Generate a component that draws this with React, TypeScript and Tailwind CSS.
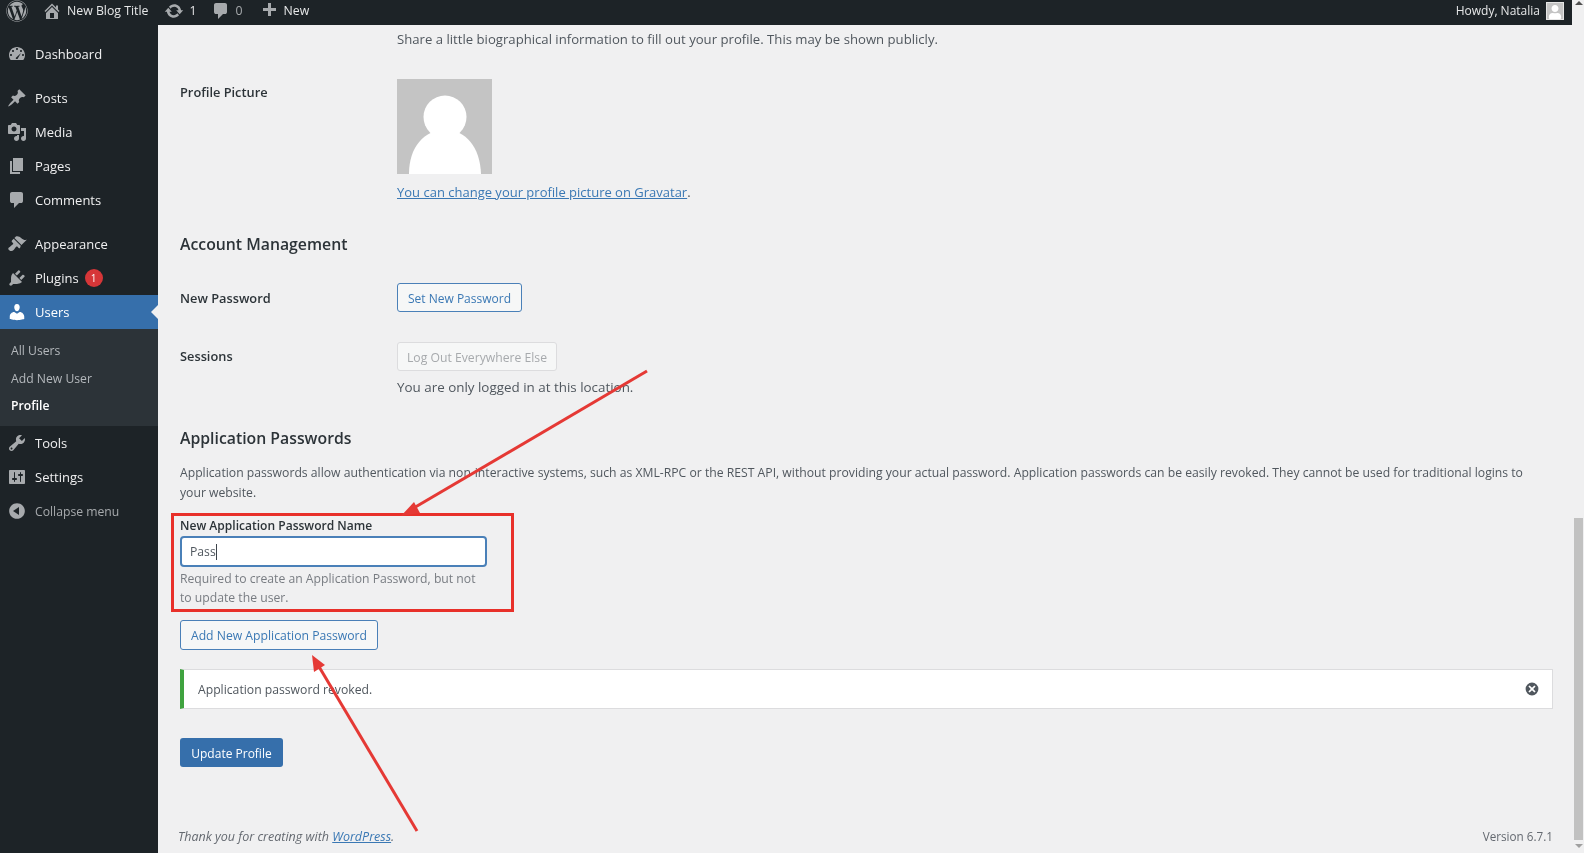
import React from 'react';
import { FaWordpress, FaUser } from 'react-icons/fa';

const Dash = ({ d, className = 'fill-[#a7aaad]' }: { d: string; className?: string }) => (
  <svg viewBox="0 0 20 20" className={`w-[20px] h-[20px] shrink-0 ${className}`}>
    <path d={d} fillRule="evenodd" />
  </svg>
);

const P = {
  dashboard: 'M3.76 16h12.48c1.1-1.37 1.76-3.11 1.76-5 0-4.420-3.580-8-8-8s-8 3.580-8 8c0 1.890.66 3.630 1.760 5zM10 4c.55 0 1 .45 1 1s-.45 1-1 1-1-.45-1-1 .45-1 1-1zM6 6c.55 0 1 .45 1 1s-.45 1-1 1-1-.45-1-1 .45-1 1-1zm8 0c.55 0 1 .45 1 1s-.45 1-1 1-1-.45-1-1 .45-1 1-1zM4 10c.55 0 1 .45 1 1s-.45 1-1 1-1-.45-1-1 .45-1 1-1zm12 0c.55 0 1 .45 1 1s-.45 1-1 1-1-.45-1-1 .45-1 1-1zM9 15l-.3-.9 5.300-5.100-3.500 6z',
  post: 'M10.44 3.020l1.820-1.820 6.360 6.350-1.830 1.820c-1.050-.68-2.480-.57-3.410.36l-.75.75c-.92.93-1.040 2.350-.35 3.410l-1.830 1.820-2.410-2.410-2.800 2.790c-.42.42-3.380 2.710-3.800 2.290s1.860-3.390 2.280-3.810l2.790-2.790L4.100 9.360l1.830-1.820c1.050.69 2.480.57 3.410-.36l.75-.75c.93-.92 1.040-2.350.35-3.410z',
  media: 'M13 11V4c0-.55-.45-1-1-1h-1.670L9 1H5L3.670 3H2c-.55 0-1 .45-1 1v7c0 .55.45 1 1 1h10c.55 0 1-.45 1-1zM7 4.500c1.380 0 2.500 1.120 2.500 2.500S8.380 9.500 7 9.500 4.500 8.380 4.500 7 5.620 4.500 7 4.500zM14 6h5v10.500c0 1.380-1.120 2.500-2.500 2.500S14 17.880 14 16.500s1.120-2.500 2.500-2.500c.17 0 .34.02.5.05V9h-3V6zm-4 8.050V13h2v3.500c0 1.380-1.120 2.500-2.500 2.500S7 17.880 7 16.500 8.120 14 9.500 14c.17 0 .34.02.5.05z',
  page: 'M6 15V2h10v13H6zm-1 1h8v2H3V5h2v11z',
  comment: 'M5 2h9q.82 0 1.410.59T16 4v7q0 .82-.59 1.410T14 13h-2l-5 5v-5H5q-.82 0-1.410-.59T3 11V4q0-.82.59-1.410T5 2z',
  appearance: 'M14.480 11.060L7.410 3.990l1.500-1.500c.5-.56 2.300-.47 3.510.32 1.210.8 1.430 1.280 2.910 2.100 1.180.64 2.450 1.260 4.450.85zm-.71.71L6.700 4.700 4.930 6.470c-.39.39-.39 1.020 0 1.410l1.060 1.060c.39.39.39 1.030 0 1.420-.6.6-1.430 1.110-2.210 1.690-.35.26-.7.53-1.010.84C1.430 13.230.99 14.520 1.500 15.500c.44.93 1.640 1.480 2.560 1.560.99.1 1.880-.3 2.540-.97.32-.31.58-.66.84-1.010.58-.78 1.090-1.610 1.690-2.210.39-.39 1.030-.39 1.420 0l1.060 1.060c.39.39 1.020.39 1.410 0z',
  plugin: 'M13.110 4.360L9.870 7.600 8 5.730l3.240-3.240c.35-.34 1.050-.2 1.560.32.52.51.66 1.210.31 1.550zm-8 1.770l.91-1.120 9.010 9.010-1.190.84c-.71.71-2.630 1.160-3.820 1.160H6.140L4.900 17.260c-.59.59-1.540.59-2.120 0-.59-.58-.59-1.530 0-2.120l1.240-1.240v-3.880c0-1.130.4-3.190 1.090-3.890zm7.260 3.970l3.240-3.240c.34-.35 1.040-.21 1.550.31.52.51.66 1.210.31 1.550l-3.240 3.250z',
  users: 'M10 9.250c-2.270 0-2.730-3.440-2.730-3.440C7 4.020 7.820 2 9.970 2c2.160 0 2.980 2.020 2.710 3.810 0 0-.41 3.440-2.680 3.440zm0 2.570L12.720 10c2.390 0 4.520 2.330 4.520 4.530v2.490s-3.650 1.130-7.240 1.130c-3.650 0-7.240-1.130-7.240-1.130v-2.490c0-2.250 1.940-4.480 4.470-4.480z',
  tools: 'M16.680 9.770c-1.340 1.340-3.300 1.670-4.950.99l-5.410 6.520c-.99.99-2.590.99-3.580 0s-.99-2.590 0-3.570l6.520-5.420c-.68-1.650-.35-3.610.99-4.950 1.280-1.280 3.120-1.620 4.720-1.060l-2.890 2.890 2.820 2.820 2.860-2.870c.53 1.580.18 3.390-1.080 4.650zM3.810 16.210c.4.39 1.040.39 1.430 0 .4-.4.4-1.040 0-1.430-.39-.4-1.030-.4-1.430 0-.39.39-.39 1.030 0 1.430z',
  settings: 'M18 16V4c0-.55-.45-1-1-1H3c-.55 0-1 .45-1 1v12c0 .55.45 1 1 1h14c.55 0 1-.45 1-1zM8 11h1c.55 0 1 .45 1 1s-.45 1-1 1H8v1.500c0 .28-.22.5-.5.5s-.5-.22-.5-.5V13H6c-.55 0-1-.45-1-1s.45-1 1-1h1V5.500c0-.28.22-.5.5-.5s.5.22.5.5V11zm5-2h-1c-.55 0-1-.45-1-1s.45-1 1-1h1V5.500c0-.28.22-.5.5-.5s.5.22.5.5V7h1c.55 0 1 .45 1 1s-.45 1-1 1h-1v5.500c0 .28-.22.5-.5.5s-.5-.22-.5-.5V9z',
  collapse: 'M10 2.160c4.330 0 7.840 3.510 7.840 7.840s-3.510 7.840-7.840 7.840S2.160 14.330 2.160 10 5.710 2.160 10 2.160zm2 11.840V6l-6 4z',
  update: 'M10.200 3.280c3.530 0 6.430 2.610 6.920 6h2.080l-3.500 4-3.500-4h2.320c-.45-1.970-2.210-3.440-4.320-3.440-1.450 0-2.730.71-3.540 1.790L4.950 5.660C6.230 4.200 8.110 3.280 10.200 3.280zm-.4 13.440c-3.520 0-6.430-2.610-6.920-6H.8l3.500-4c1.170 1.330 2.330 2.670 3.500 4H5.480c.45 1.970 2.210 3.440 4.320 3.440 1.450 0 2.730-.71 3.540-1.790l1.710 1.950c-1.280 1.460-3.150 2.380-5.250 2.380z',
  plus: 'M17 7v3h-5v5H9v-5H4V7h5V2h3v5h5z',
  home: 'M16 8.500l1.530 1.530-1.060 1.060L10 4.620l-6.470 6.470-1.060-1.060L10 2.500l4 4v-2h2v4zm-6-2.460l6 5.990V18H4v-5.970zM12 17v-5H8v5h4z',
  close: 'M10 2a8 8 0 1 1 0 16 8 8 0 0 1 0-16z M7 5.500 5.500 7l3 3-3 3L7 14.500l3-3 3 3 1.500-1.500-3-3 3-3L13 5.500l-3 3z',
};

function MenuItem({ label, d, children }: { label: string; d: string; children?: React.ReactNode }) {
  return (
    <div className="h-[34px] flex items-center text-[#f0f0f1] text-[13px]">
      <span className="w-[35px] pl-[7px] flex items-center shrink-0"><Dash d={d} /></span>
      <span>{label}</span>
      {children}
    </div>
  );
}

const TopItem = ({ d, label, className = '' }: { d: string; label: string; className?: string }) => (
  <div className={`flex items-center gap-[5px] ${className}`}>
    <Dash d={d} />
    <span>{label}</span>
  </div>
);

const rowLabel = 'w-[217px] shrink-0 font-semibold text-[12.800px] text-[#2c3338]';
const h2 = 'text-[15.800px] leading-[24px] font-semibold text-[#2c3338]';
const secondary = 'rounded-[3px] border border-[#4a80b8] text-[#3a78b4] bg-[#f6f7f7] pt-[2px]';

export default function App() {
  return (
    <div className="relative w-[1584px] h-[858px] overflow-hidden flex flex-col bg-white font-['Open_Sans',sans-serif] text-[12.200px] leading-[20px] text-[#50575e] blur-[0.7px]">
      <div className="h-[853px] flex bg-[#f0f0f1]">
        <div className="w-[1572px] flex flex-col">
          {/* Top bar */}
          <header className="h-[25px] bg-[#1d2327] text-[#e6e7e8] flex items-center pl-[6px] pr-[8px] pb-[4px] shrink-0 text-[12.300px]">
            <FaWordpress size={22} className="text-[#a7aaad] mr-[14px]" />
            <TopItem d={P.home} label="New Blog Title" className="mr-[16px]" />
            <TopItem d={P.update} label="1" className="mr-[14px]" />
            <TopItem d={P.comment} label="0" className="mr-[16px] text-[#a7aaad]" />
            <TopItem d={P.plus} label="New" />
            <div className="ml-auto flex items-center gap-[6px]">
              <span className="text-[12px]">Howdy, Natalia</span>
              <div className="w-[18px] h-[18px] bg-[#c4c4c4] border border-[#e6e6e6] flex items-end justify-center overflow-hidden">
                <FaUser size={14} className="text-white" />
              </div>
            </div>
          </header>

          <div className="flex-1 flex min-h-0">
            {/* Sidebar */}
            <aside className="w-[158px] shrink-0 bg-[#1d2327] pt-[12px]">
              <MenuItem label="Dashboard" d={P.dashboard} />
              <div className="mt-[10px]">
                <MenuItem label="Posts" d={P.post} />
                <MenuItem label="Media" d={P.media} />
                <MenuItem label="Pages" d={P.page} />
                <MenuItem label="Comments" d={P.comment} />
              </div>
              <div className="mt-[10px]">
                <MenuItem label="Appearance" d={P.appearance} />
                <MenuItem label="Plugins" d={P.plugin}>
                  <span className="ml-[6px] w-[18px] h-[18px] rounded-full bg-[#d63638] text-white text-[10px] leading-[18px] text-center">1</span>
                </MenuItem>
              </div>
              <div className="relative h-[34px] bg-[#366fab] text-white flex items-center text-[13px]">
                <span className="w-[35px] pl-[7px] shrink-0"><Dash d={P.users} className="fill-white" /></span>
                <span className="pb-[1px]">Users</span>
                <span className="absolute right-0 top-[10px] border-y-[7px] border-y-transparent border-r-[7px] border-r-[#f0f0f1]" />
              </div>
              <div className="h-[97px] bg-[#2c3338] pt-[8px] pl-[11px] text-[12.200px] text-[#b4b8bc] flex flex-col">
                <span className="h-[28px] leading-[28px]">All Users</span>
                <span className="h-[28px] leading-[28px]">Add New User</span>
                <span className="h-[27px] leading-[26px] font-semibold text-white">Profile</span>
              </div>
              <MenuItem label="Tools" d={P.tools} />
              <MenuItem label="Settings" d={P.settings} />
              <div className="h-[34px] flex items-center text-[#a7aaad]">
                <span className="w-[35px] pl-[7px] shrink-0"><Dash d={P.collapse} /></span>
                <span className="pt-[2px]">Collapse menu</span>
              </div>
            </aside>

            {/* Content */}
            <main className="flex-1 pl-[22px] pr-[19px] pt-[4px] flex flex-col">
              <p className="ml-[217px] text-[13.150px]">Share a little biographical information to fill out your profile. This may be shown publicly.</p>

              <div className="flex mt-[30px]">
                <div className={`${rowLabel} pt-[3px]`}>Profile Picture</div>
                <div>
                  <div className="w-[95px] h-[95px] bg-[#c4c4c4]">
                    <svg viewBox="0 0 95 95" className="w-[95px] h-[95px] fill-white">
                      <circle cx="48" cy="38" r="21.500" />
                      <path d="M12 95c0-27 15-44 36-44s35 17 36 44z" />
                    </svg>
                  </div>
                  <p className="mt-[8px] text-[13px]"><a className="text-[#3a78b4] underline">You can change your profile picture on Gravatar</a>.</p>
                </div>
              </div>

              <h2 className={`${h2} mt-[30px]`}>Account Management</h2>

              <div className="flex items-center mt-[27px]">
                <div className={rowLabel}>New Password</div>
                <button className={`w-[125px] h-[29px] text-[12px] ${secondary}`}>Set New Password</button>
              </div>

              <div className="flex mt-[30px]">
                <div className={`${rowLabel} pt-[4px]`}>Sessions</div>
                <div>
                  <button className="w-[160px] h-[29px] rounded-[3px] border border-[#dcdcde] text-[#a7aaad] bg-[#f6f7f7] pt-[2px]">Log Out Everywhere Else</button>
                  <p className="mt-[6px] text-[13.400px]">You are only logged in at this location.</p>
                </div>
              </div>

              <h2 className={`${h2} mt-[29px]`}>Application Passwords</h2>
              <p className="mt-[13px] w-[1360px]">Application passwords allow authentication via non-interactive systems, such as XML-RPC or the REST API, without providing your actual password. Application passwords can be easily revoked. They cannot be used for traditional logins to your website.</p>

              <label className="mt-[14px] leading-[18px] font-semibold text-[#2c3338] text-[12.050px]">New Application Password Name</label>
              <div className="mt-[1px] w-[307px] h-[31px] rounded-[4px] border-2 border-[#4a80b8] bg-white flex items-center pl-[8px] pt-[1px]">
                <span>Pass</span>
                <span className="w-[1px] h-[16px] bg-[#3c434a]" />
              </div>
              <p className="mt-[3px] w-[306px] leading-[18.500px] text-[#787c82]">Required to create an Application Password, but not to update the user.</p>

              <button className={`mt-[13px] w-[198px] h-[30px] ${secondary}`}>Add New Application Password</button>

              <div className="mt-[19px] h-[40px] bg-white border border-[#dcdcde] border-l-4 border-l-[#3fa33f] flex items-center pl-[14px] pr-[12px] justify-between">
                <span className="pt-[1px]">Application password revoked.</span>
                <Dash d={P.close} className="fill-[#50575e] !w-[16px] !h-[16px]" />
              </div>

              <button className="mt-[29px] w-[103px] h-[29px] rounded-[3px] bg-[#366fab] text-white text-[12px] pt-[2px]">Update Profile</button>

              <div className="mt-[60px] flex justify-between text-[#646970]">
                <span className="italic -ml-[2px] text-[12.500px]">Thank you for creating with <a className="text-[#3a78b4] underline">WordPress</a>.</span>
                <span className="text-[11.700px] -mt-[1px]">Version 6.7.1</span>
              </div>
            </main>
          </div>
        </div>

        {/* Scrollbar */}
        <div className="w-[12px] flex flex-col items-end">
          <span className="mt-[1px] mr-[1px] border-x-[4px] border-x-transparent border-b-[4px] border-b-[#505050]" />
          <div className="mt-[513px] w-[9px] mr-[1px] h-[322px] bg-[#c1c1c1]" />
          <span className="mt-[4px] mr-[1px] border-x-[4px] border-x-transparent border-t-[4px] border-t-[#a0a0a0]" />
        </div>
      </div>

      {/* Annotations */}
      <div className="absolute left-[171px] top-[513px] w-[343px] h-[99px] border-[3px] border-[#e8302a]" />
      <svg className="absolute inset-0 w-[1584px] h-[858px] pointer-events-none" viewBox="0 0 1584 858">
        <line x1="647" y1="371" x2="412" y2="509" stroke="#e53935" strokeWidth="3" />
        <polygon points="401,516 414,502 420,513" fill="#e53935" />
        <line x1="417" y1="831" x2="318" y2="665" stroke="#e53935" strokeWidth="3" />
        <polygon points="312,655 325,665 314,672" fill="#e53935" />
      </svg>
    </div>
  );
}
